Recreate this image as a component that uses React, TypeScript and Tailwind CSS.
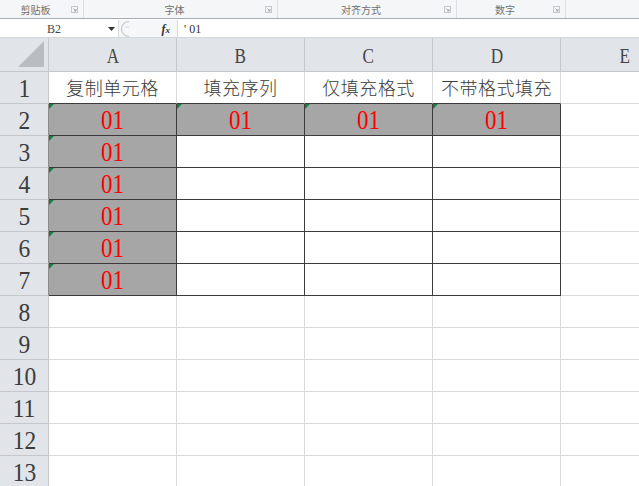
import React from "react";

const COLS = ["A", "B", "C", "D", "E"];
const ROW1 = ["复制单元格", "填充序列", "仅填充格式", "不带格式填充", ""];

function Launcher() {
  return (
    <svg width="7" height="7" viewBox="0 0 7 7" className="shrink-0">
      <rect x="0.5" y="0.5" width="6" height="6" fill="none" stroke="#c4c7cb" />
      <path d="M2.5 2.5 L5 5 M5 3 V5 H3" stroke="#9a9da1" strokeWidth="0.9" fill="none" />
    </svg>
  );
}

function Group({ label, w, last }: { label: string; w: string; last?: boolean }) {
  return (
    <div className={`flex items-center h-full ${w} ${last ? "flex-1" : "border-r border-[#dcdee2]"}`}>
      <div className="flex-1 text-center">{label}</div>
      {!last && (
        <div className="mr-[5px] flex items-center">
          <Launcher />
        </div>
      )}
    </div>
  );
}

function Cell({ r, c }: { r: number; c: number }) {
  const inTable = r >= 2 && r <= 7 && c <= 3;
  const filled = (c === 0 && r >= 2 && r <= 7) || (r === 2 && c <= 3);
  const rightDark = inTable;
  const bottomDark = inTable || (r === 1 && c <= 3);
  const cls = [
    "relative w-[128px] shrink-0 h-full border-r border-b flex items-center justify-center",
    rightDark ? "border-r-[#3b3b3b]" : "border-r-[#dadada]",
    bottomDark ? "border-b-[#3b3b3b]" : "border-b-[#dadada]",
    filled ? "bg-[#a6a6a6]" : "bg-white",
  ].join(" ");
  let content: React.ReactNode = null;
  if (r === 1) {
    content = (
      <span className="[font-family:'Noto_Sans_CJK_SC',sans-serif] font-light text-[18px] text-[#3a3a3a] tracking-[0.5px]">
        {ROW1[c]}
      </span>
    );
  } else if (filled) {
    content = (
      <span className="inline-block scale-x-[0.85] [font-family:'Liberation_Serif',serif] text-[27px] leading-none text-[#ff0000] mt-[1px]">
        01
      </span>
    );
  }
  return (
    <div className={cls}>
      {filled && (
        <div className="absolute top-0 left-0 w-0 h-0 border-t-[5px] border-r-[5px] border-t-[#217a3c] border-r-transparent" />
      )}
      {content}
    </div>
  );
}

export default function App() {
  const rows = Array.from({ length: 13 }, (_, i) => i + 1);
  return (
    <div className="w-[639px] h-[486px] overflow-hidden bg-white">
      {/* ribbon group labels */}
      <div className="flex h-[19px] bg-[#f5f6f7] border-b border-[#a9adb3] text-[10px] text-[#707070] [font-family:'Noto_Sans_CJK_SC',sans-serif]">
        <Group label="剪贴板" w="w-[84px]" />
        <Group label="字体" w="w-[194px]" />
        <Group label="对齐方式" w="w-[179px]" />
        <Group label="数字" w="w-[109px]" />
        <Group label="" w="" last />
      </div>
      {/* formula bar */}
      <div className="flex h-[18px] mt-[1px] border-b border-[#d3d6da] bg-white text-[11px] text-[#444]">
        <div className="w-[104px] flex items-center justify-center [font-family:'Liberation_Serif',serif] text-[12px] pl-[4px]">B2</div>
        <div className="w-[14px] flex items-center justify-center">
          <svg width="7" height="4" viewBox="0 0 7 4">
            <path d="M0 0 H7 L3.5 4 Z" fill="#333" />
          </svg>
        </div>
        <div className="w-[60px] flex items-center bg-[#f6f7f8] border-l border-r border-[#d8dadd] relative">
          <svg width="16" height="18" viewBox="0 0 16 18" className="-ml-[1px]">
            <path d="M11 1.5 A7.5 7.5 0 0 0 11 16.5" fill="none" stroke="#c5c8cc" strokeWidth="1.2" />
            <circle cx="8" cy="7" r="0.6" fill="#b0b3b7" />
            <circle cx="10" cy="7" r="0.6" fill="#b0b3b7" />
          </svg>
          <div className="flex-1" />
          <span className="[font-family:'Liberation_Serif',serif] italic font-bold text-[12px] text-[#333] mr-[7px]">
            f<span className="text-[9px]">x</span>
          </span>
        </div>
        <div className="flex-1 flex items-center pl-[6px] [font-family:'Liberation_Serif',serif] text-[12px] text-[#333]">
          ' 01
        </div>
      </div>
      {/* column headers */}
      <div className="flex h-[34px] bg-[#e1e4e8] [font-family:'Liberation_Serif',serif] text-[22px] text-[#444]">
        <div className="w-[49px] shrink-0 h-full border-r border-b border-[#c4c8cd] relative flex items-end justify-end pr-[4px] pb-[4px]">
          <svg width="26" height="26" viewBox="0 0 26 26">
            <path d="M26 0 V26 H0 Z" fill="#b9bdc2" />
          </svg>
        </div>
        {COLS.map((c) => (
          <div
            key={c}
            className="w-[128px] shrink-0 h-full border-r border-b border-[#c4c8cd] flex items-center justify-center pt-[2px]"
          >
            <span className="inline-block scale-x-[0.78]">{c}</span>
          </div>
        ))}
      </div>
      {/* rows */}
      {rows.map((r) => (
        <div key={r} className="flex h-[32px]">
          <div
            className={`w-[49px] shrink-0 h-full border-b border-r border-b-[#c4c8cd] ${
              r >= 2 && r <= 7 ? "border-r-[#8a8a8a]" : "border-r-[#c4c8cd]"
            } bg-[#e1e4e8] flex items-center justify-center [font-family:'Liberation_Serif',serif] text-[25px] text-[#3c3c3c] leading-none pt-[2px]`}
          >
            <span className="inline-block scale-x-[0.94]">{r}</span>
          </div>
          {COLS.map((_, c) => (
            <Cell key={c} r={r} c={c} />
          ))}
        </div>
      ))}
    </div>
  );
}
